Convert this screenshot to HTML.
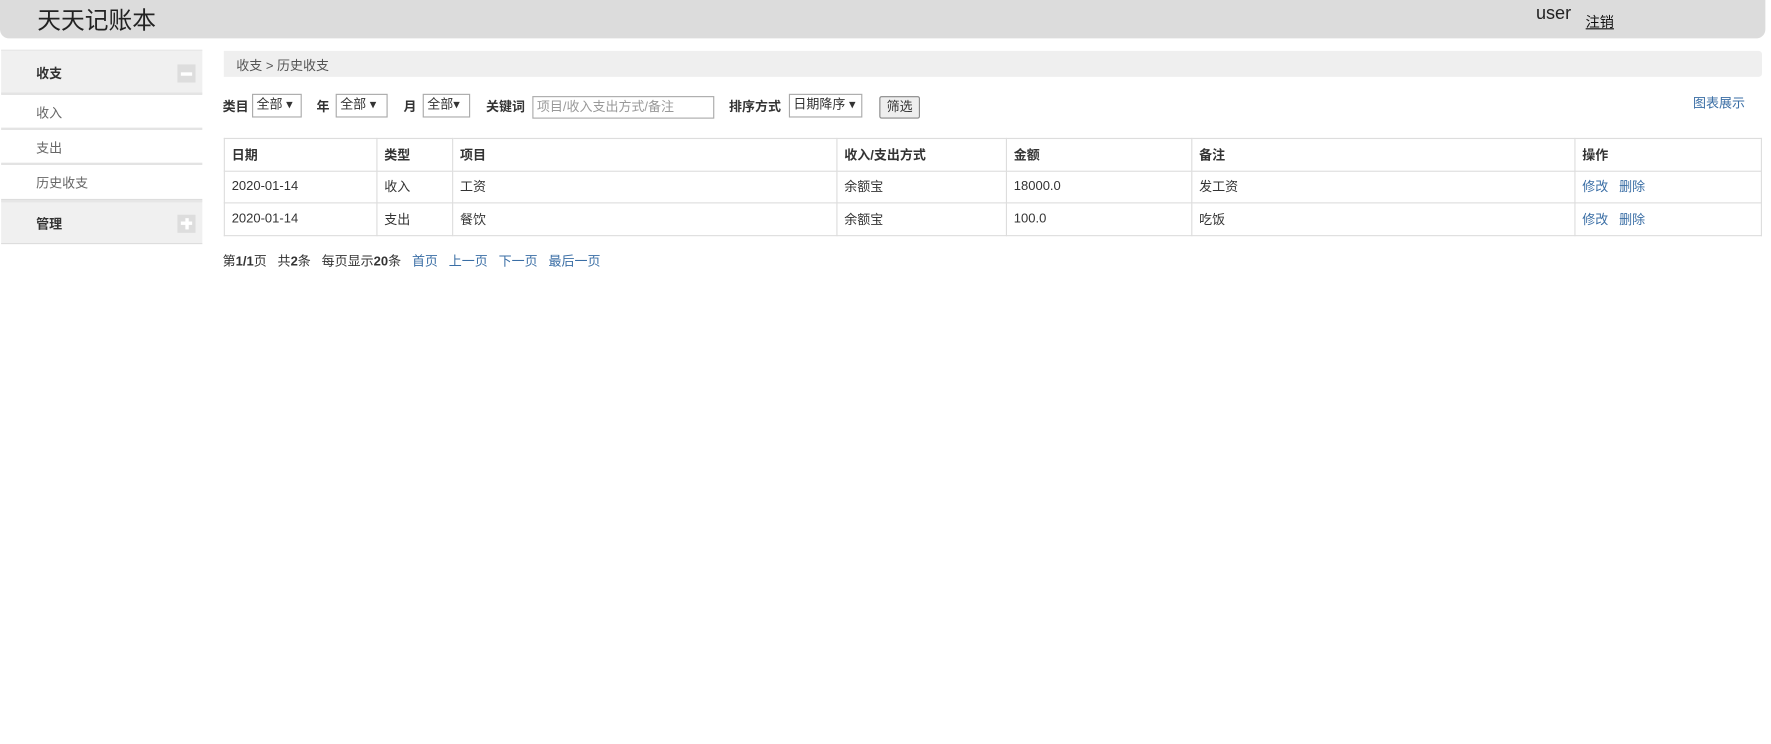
<!DOCTYPE html>
<html><head><meta charset="utf-8"><style>
*{margin:0;padding:0;box-sizing:border-box}
body{width:1771px;height:743px;background:#fff;font-family:"Liberation Sans","Microsoft YaHei","Noto Sans CJK SC",sans-serif;font-size:11.5px;color:#333;position:relative;overflow:hidden}
#w{position:absolute;left:0;top:0;width:1567px;height:658px;transform:scale(1.1302);transform-origin:0 0}
.a{position:absolute;white-space:nowrap}
.hdr{left:0;top:0;width:1562px;height:34px;background:#dcdcdc;border-radius:0 0 8px 8px}
.side{left:1px;width:178px;border-bottom:1px solid #ddd}
.sh{background:#f0f0f0;font-weight:bold;color:#333}
.si{background:#fff;color:#666;border-top:1px solid #e3e3e3}
.ic{position:absolute;left:156px;width:16px;height:16px;background:#ddd}
.sel{border:1px solid #aaa;height:21px;padding:0 3px;line-height:19px;font-size:11.5px;color:#333;background:#fff}
.lbl{font-weight:bold;color:#333}
a,.lnk{color:#3a6ea5;text-decoration:none}
table{border-collapse:collapse;position:absolute;left:198px;top:122px;width:1361px}
td{border:1px solid #ddd;height:28.5px;padding:0 6px;font-size:11.5px;color:#333}
tr:first-child td{font-weight:bold}
</style></head><body><div id="w">
<div class="a hdr"></div>
<div class="a" style="left:33px;top:2px;font-size:21px;color:#222">天天记账本</div>
<div class="a" style="left:1359px;top:4px;font-size:16px;color:#222">user</div>
<div class="a" style="left:1403px;top:9px;font-size:12.5px;color:#111;text-decoration:underline">注销</div>

<div class="a side sh" style="top:44px;height:39px;border-top:1px solid #e6e6e6;border-bottom:1px solid #ddd"><span class="a" style="left:31px;top:12px">收支</span><span class="ic" style="top:12px"></span><span class="a" style="left:159px;top:19px;width:10px;height:3px;background:#fff"></span></div>
<div class="a side si" style="top:83px;height:31px"><span class="a" style="left:31px;top:8px">收入</span></div>
<div class="a side si" style="top:114px;height:31px"><span class="a" style="left:31px;top:8px">支出</span></div>
<div class="a side si" style="top:145px;height:32px"><span class="a" style="left:31px;top:8px">历史收支</span></div>
<div class="a side sh" style="top:177px;height:39px;border-top:2px solid #e6e6e6"><span class="a" style="left:31px;top:11px">管理</span><span class="ic" style="top:11px"></span><span class="a" style="left:159px;top:17px;width:10px;height:3px;background:#fff"></span><span class="a" style="left:162.5px;top:14px;width:3px;height:10px;background:#fff"></span></div>

<div class="a" style="left:198px;top:45px;width:1361px;height:23px;background:#efefef;border-radius:0 3px 3px 0"></div>
<div class="a" style="left:209px;top:50px;color:#555">收支 &gt; 历史收支</div>

<div class="a lbl" style="left:197px;top:86px">类目</div>
<div class="a sel" style="left:223px;top:83px;width:44px">全部 ▾</div>
<div class="a lbl" style="left:280px;top:86px">年</div>
<div class="a sel" style="left:297px;top:83px;width:46px">全部 ▾</div>
<div class="a lbl" style="left:357px;top:86px">月</div>
<div class="a sel" style="left:374px;top:83px;width:42px">全部▾</div>
<div class="a lbl" style="left:430px;top:86px">关键词</div>
<div class="a sel" style="left:471px;top:85px;width:161px;height:20px;color:#999">项目/收入支出方式/备注</div>
<div class="a lbl" style="left:645px;top:86px">排序方式</div>
<div class="a sel" style="left:698px;top:83px;width:65px">日期降序 ▾</div>
<div class="a" style="left:778px;top:85px;width:36px;height:20px;border:1px solid #888;background:#eee;text-align:center;line-height:18px;border-radius:2px">筛选</div>
<div class="a lnk" style="left:1498px;top:83px">图表展示</div>

<table>
<tr><td style="width:135px">日期</td><td style="width:67px">类型</td><td style="width:340px">项目</td><td style="width:150px">收入/支出方式</td><td style="width:164px">金额</td><td style="width:339px">备注</td><td>操作</td></tr>
<tr><td>2020-01-14</td><td>收入</td><td>工资</td><td>余额宝</td><td>18000.0</td><td>发工资</td><td><a>修改</a>&nbsp;&nbsp; <a>删除</a></td></tr>
<tr><td>2020-01-14</td><td>支出</td><td>餐饮</td><td>余额宝</td><td>100.0</td><td>吃饭</td><td><a>修改</a>&nbsp;&nbsp; <a>删除</a></td></tr>
</table>

<div class="a" style="left:197px;top:223px">第<b>1/1</b>页&nbsp;&nbsp; 共<b>2</b>条&nbsp;&nbsp; 每页显示<b>20</b>条&nbsp;&nbsp; <a>首页</a>&nbsp;&nbsp; <a>上一页</a>&nbsp;&nbsp; <a>下一页</a>&nbsp;&nbsp; <a>最后一页</a></div>
</div></body></html>
